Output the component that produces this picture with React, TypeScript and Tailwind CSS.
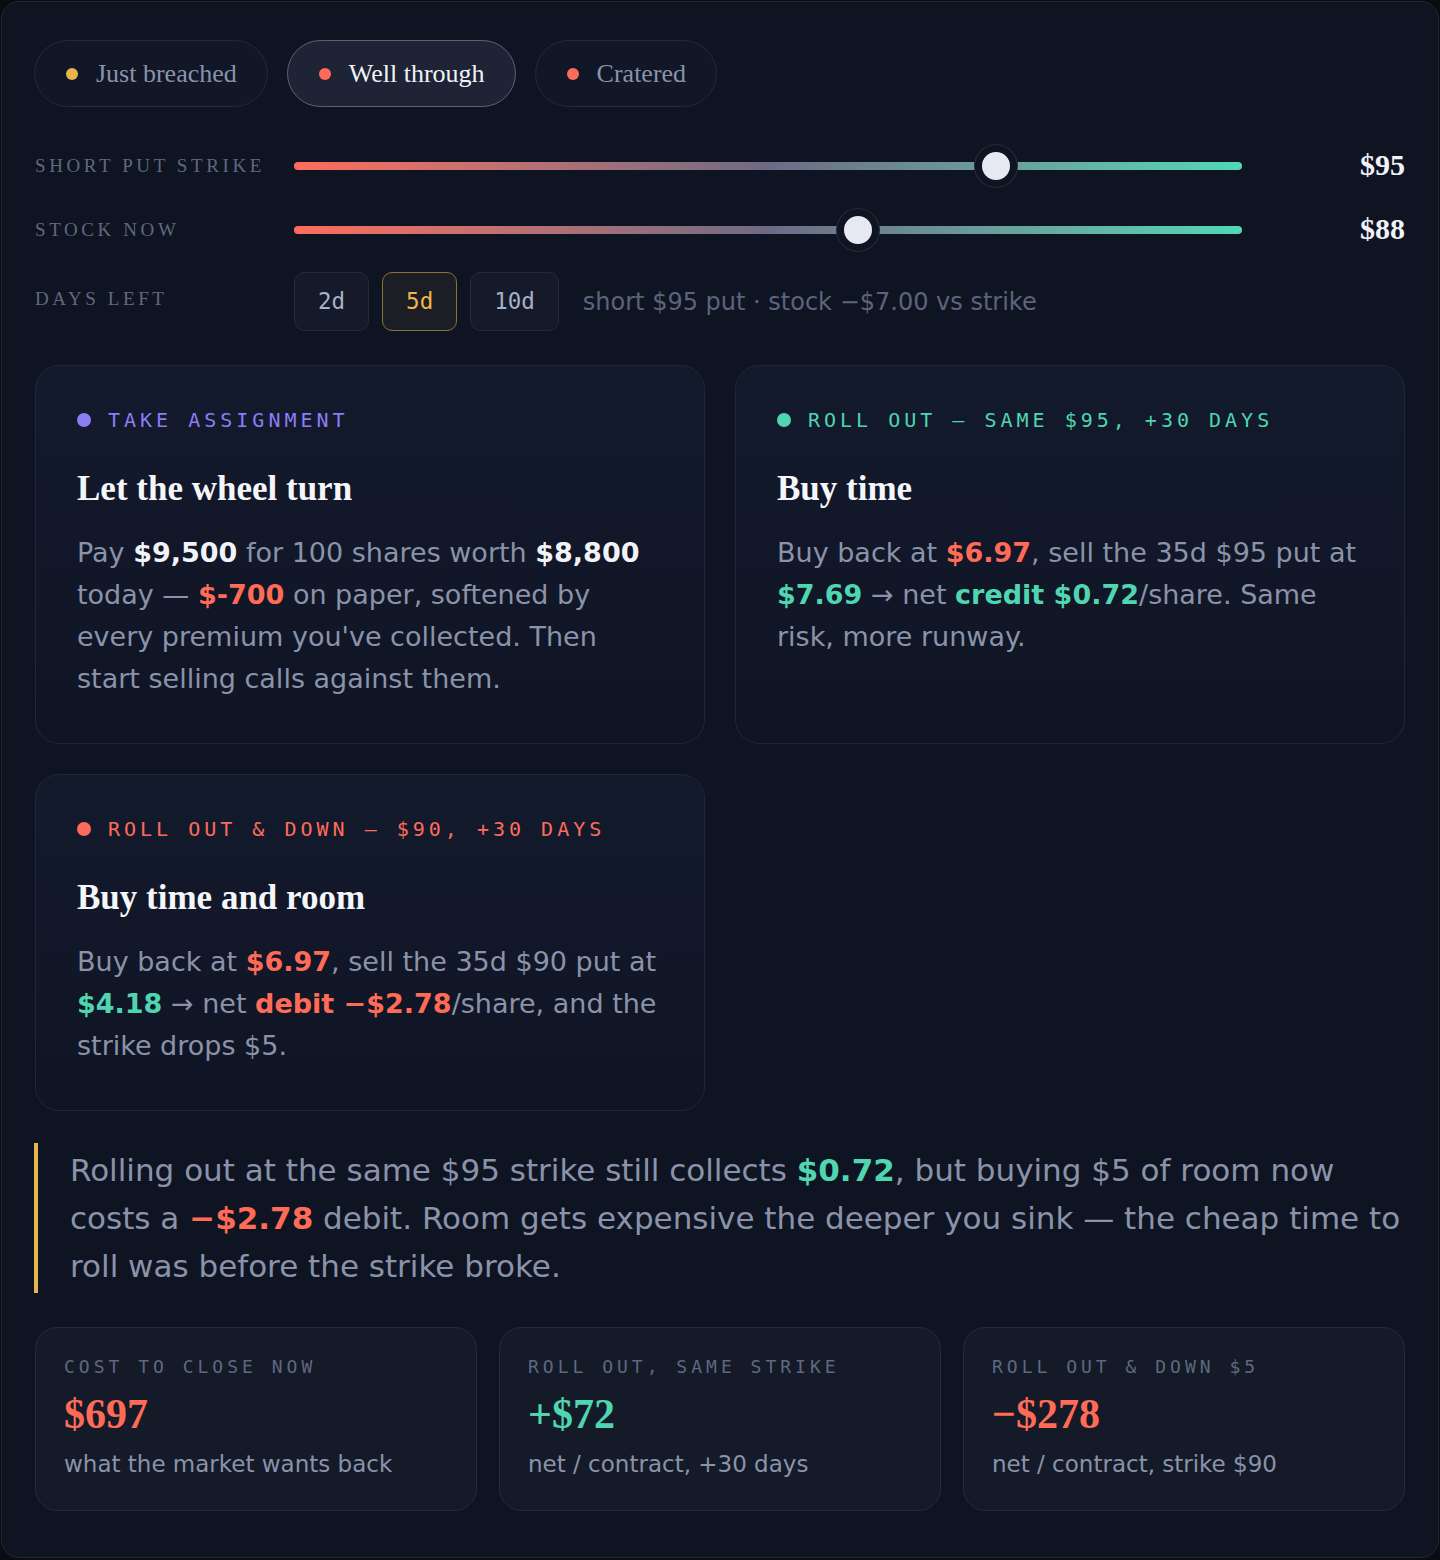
import React from 'react';

const serif = "font-['Liberation_Serif','Times_New_Roman',serif]";
const sans = "font-['DejaVu_Sans','Noto_Sans',sans-serif]";
const mono = "font-['DejaVu_Sans_Mono','Liberation_Mono',monospace]";

const scenarios = [
  { label: 'Just breached', dot: 'bg-[#e9b44c]', active: false },
  { label: 'Well through', dot: 'bg-[#ff6b5b]', active: true },
  { label: 'Cratered', dot: 'bg-[#ff6b5b]', active: false },
];

const sliders = [
  { label: 'SHORT PUT STRIKE', value: '$95', pct: 74.05 },
  { label: 'STOCK NOW', value: '$88', pct: 59.5 },
];

const days = [
  { label: '2d', active: false },
  { label: '5d', active: true },
  { label: '10d', active: false },
];

function B({ children }: { children: React.ReactNode }) {
  return <b className="font-bold text-[#f1f3f8]">{children}</b>;
}
function Red({ children }: { children: React.ReactNode }) {
  return <b className="font-bold text-[#ff6b57]">{children}</b>;
}
function Teal({ children }: { children: React.ReactNode }) {
  return <b className="font-bold text-[#4fd6b0]">{children}</b>;
}

function Slider({ label, value, pct }: { label: string; value: string; pct: number }) {
  return (
    <div className="flex h-[44px] items-center">
      <div className={`w-[259px] shrink-0 ${serif} text-[19px] tracking-[3.6px] text-[#5f6880]`}>{label}</div>
      <div className="relative h-2 flex-1 rounded-full bg-gradient-to-r from-[#ff6b5b] via-[#6c6b84] to-[#4fd8b5]">
        <div
          className="absolute top-1/2 h-[42px] w-[42px] -translate-x-1/2 -translate-y-1/2 rounded-full border-[7px] border-[#0f1423] bg-[#e6e9f2] shadow-[0_0_0_1px_#262c3c]"
          style={{ left: `${pct}%` }}
        />
      </div>
      <div className={`-mt-[4px] w-[163px] shrink-0 text-right ${serif} text-[30px] font-bold text-[#f1f3f8]`}>{value}</div>
    </div>
  );
}

function Card({
  tag,
  dot,
  tone,
  title,
  children,
}: {
  tag: string;
  dot: string;
  tone: string;
  title: string;
  children: React.ReactNode;
}) {
  return (
    <div className="rounded-[24px] border border-[#1f2636] bg-gradient-to-b from-[#131a2c] to-[#10162660] px-[41px] pb-[43px] pt-[42px]">
      <div className={`flex items-center gap-[17px] ${mono} text-[20px] leading-[24px] tracking-[4px] ${tone}`}>
        <span className={`h-[14px] w-[14px] rounded-full ${dot}`} />
        {tag}
      </div>
      <h2 className={`mt-[35px] ${serif} text-[35px] font-bold leading-[44px] text-[#f5f6fa]`}>{title}</h2>
      <p className={`mt-[21px] ${sans} text-[27px] leading-[42px] text-[#8a93a9]`}>{children}</p>
    </div>
  );
}

function Stat({ label, value, tone, sub }: { label: string; value: string; tone: string; sub: string }) {
  return (
    <div className="rounded-[22px] border border-[#232a3a] bg-[#151a29] px-[28px] pb-[31px] pt-[27px]">
      <div className={`${mono} text-[18px] leading-[24px] tracking-[4px] text-[#5f6880]`}>{label}</div>
      <div className={`mt-[11px] ${serif} text-[42px] font-bold leading-[48px] ${tone}`}>{value}</div>
      <div className={`mt-[11px] ${sans} text-[23px] leading-[30px] text-[#8a93a9]`}>{sub}</div>
    </div>
  );
}

export default function App() {
  return (
    <div className="min-h-screen bg-[#0a0c10] p-[1px]">
      <div className="rounded-[18px] border border-[#232838] bg-[#0f1423] px-[33px] pb-[46px] pt-[38px]">
        {/* scenario pills */}
        <div className="-ml-px flex gap-[19px]">
          {scenarios.map((s) => (
            <div
              key={s.label}
              className={`flex h-[67px] items-center gap-[18px] rounded-full border pl-[31px] pr-[30px] ${serif} text-[26px] ${
                s.active
                  ? 'border-[#5d6272] bg-[#1e2335] text-[#f1f3f8]'
                  : 'border-[#232a3a] bg-[#111727] text-[#8a93ab]'
              }`}
            >
              <span className={`h-3 w-3 rounded-full ${s.dot}`} />
              {s.label}
            </div>
          ))}
        </div>

        {/* sliders */}
        <div className="mt-[37px] flex flex-col gap-[20px]">
          {sliders.map((s) => (
            <Slider key={s.label} {...s} />
          ))}
        </div>

        {/* days left */}
        <div className="mt-[20px] flex items-center">
          <div className={`-mt-[4px] w-[259px] shrink-0 ${serif} text-[19px] tracking-[3.6px] text-[#5f6880]`}>DAYS LEFT</div>
          <div className="flex gap-[13px]">
            {days.map((d) => (
              <div
                key={d.label}
                className={`flex h-[59px] items-center rounded-[10px] border px-[23px] ${mono} text-[22.5px] ${
                  d.active
                    ? 'border-[#8c7135] bg-[#1b1e25] text-[#f2b64a]'
                    : 'border-[#232a3a] bg-[#141a29] text-[#a7b1c8]'
                }`}
              >
                {d.label}
              </div>
            ))}
          </div>
          <div className={`ml-[24px] ${sans} text-[24px] text-[#5b647c]`}>short $95 put · stock −$7.00 vs strike</div>
        </div>

        {/* choices */}
        <div className="mt-[34px] grid grid-cols-2 gap-[30px]">
          <Card tag="TAKE ASSIGNMENT" dot="bg-[#8b7cf8]" tone="text-[#8b7cf8]" title="Let the wheel turn">
            Pay <B>$9,500</B> for 100 shares worth <B>$8,800</B> today — <Red>$-700</Red> on paper, softened by every
            premium you've collected. Then start selling calls against them.
          </Card>
          <Card tag="ROLL OUT — SAME $95, +30 DAYS" dot="bg-[#4fd6b0]" tone="text-[#4fd6b0]" title="Buy time">
            Buy back at <Red>$6.97</Red>, sell the 35d $95 put at <Teal>$7.69</Teal> → net <Teal>credit $0.72</Teal>
            /share. Same risk, more runway.
          </Card>
          <Card tag="ROLL OUT & DOWN — $90, +30 DAYS" dot="bg-[#ff6b5b]" tone="text-[#ff6b5b]" title="Buy time and room">
            Buy back at <Red>$6.97</Red>, sell the 35d $90 put at <Teal>$4.18</Teal> → net <Red>debit −$2.78</Red>
            /share, and the strike drops $5.
          </Card>
        </div>

        {/* takeaway */}
        <div
          className={`-ml-px mt-[32px] border-l-4 border-[#e9b44c] py-[3px] pl-[32px] ${sans} text-[31px] leading-[48px] text-[#8a93a9]`}
        >
          Rolling out at the same $95 strike still collects <Teal>$0.72</Teal>, but buying $5 of room now costs a{' '}
          <Red>−$2.78</Red> debit. Room gets expensive the deeper you sink — the cheap time to roll was before the
          strike broke.
        </div>

        {/* totals */}
        <div className="mt-[34px] grid grid-cols-3 gap-[22px]">
          <Stat label="COST TO CLOSE NOW" value="$697" tone="text-[#ff6b57]" sub="what the market wants back" />
          <Stat label="ROLL OUT, SAME STRIKE" value="+$72" tone="text-[#4fd6b0]" sub="net / contract, +30 days" />
          <Stat label="ROLL OUT & DOWN $5" value="−$278" tone="text-[#ff6b57]" sub="net / contract, strike $90" />
        </div>
      </div>
    </div>
  );
}
